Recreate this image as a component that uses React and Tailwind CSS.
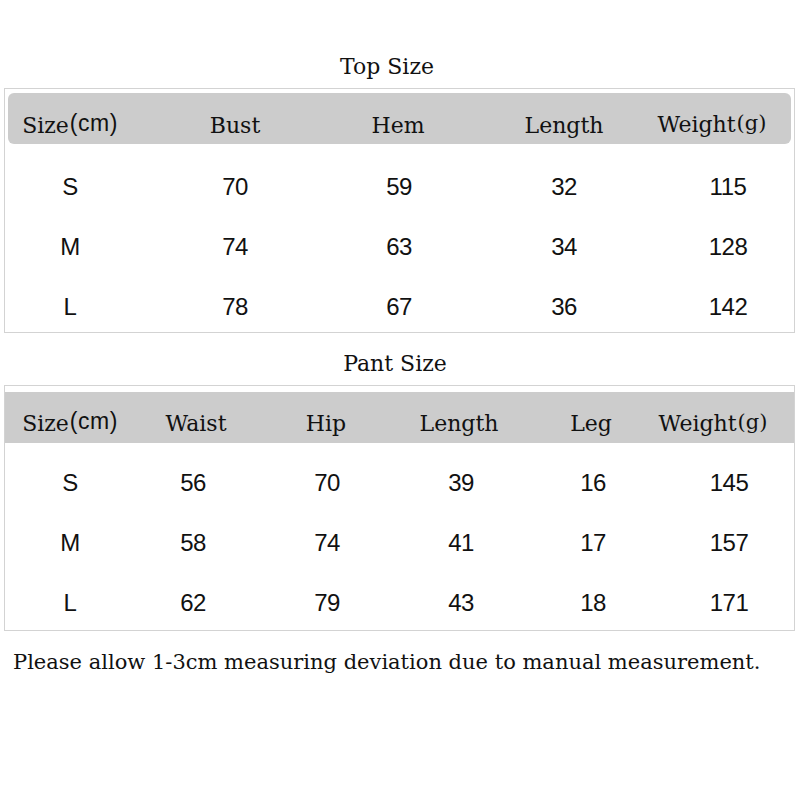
export default function App() {
  const serif = "font-['DejaVu_Serif',serif]";
  const sans = "font-['Liberation_Sans',sans-serif]";
  const topRows = [
    ["S", "70", "59", "32", "115"],
    ["M", "74", "63", "34", "128"],
    ["L", "78", "67", "36", "142"],
  ];
  const pantRows = [
    ["S", "56", "70", "39", "16", "145"],
    ["M", "58", "74", "41", "17", "157"],
    ["L", "62", "79", "43", "18", "171"],
  ];
  const cell = "flex justify-center whitespace-nowrap";
  const SizeCm = () => (
    <span className="whitespace-nowrap">
      Size<span className={`${sans} text-[23px] tracking-[0.5px] relative top-[-2px] ml-[1px]`}>(cm)</span>
    </span>
  );
  const WeightG = () => (
    <span className="whitespace-nowrap">
      Weight<span className="text-[21px] ml-[1px] relative top-[-2px]">(g)</span>
    </span>
  );
  return (
    <div className="w-[800px] h-[800px] bg-white text-[#111] overflow-hidden">
      <div className={`${serif} text-[22px] leading-none text-center pt-[56px] w-[774px]`}>Top Size</div>
      <div className="mx-[4px] mt-[10px] w-[791px] border border-[#d3d3d3] h-[245px]">
        <div className={`mx-[3px] mt-[4px] h-[51px] pt-[13px] bg-[#cccccc] rounded-[6px] grid grid-cols-[124px_206px_120px_212px_84px] items-center ${serif} text-[22px]`}>
          <div className={cell}><SizeCm /></div>
          <div className={cell}>Bust</div>
          <div className={cell}>Hem</div>
          <div className={cell}>Length</div>
          <div className={cell}><WeightG /></div>
        </div>
        <div className={`pt-[13px] ${sans} text-[24px] tracking-[-0.5px]`}>
          {topRows.map((r, i) => (
            <div key={i} className="h-[60px] grid grid-cols-[130px_200px_128px_202px_126px] items-center">
              {r.map((v, j) => (
                <div key={j} className={cell}>{v}</div>
              ))}
            </div>
          ))}
        </div>
      </div>
      <div className={`${serif} text-[22px] leading-none text-center pt-[20px] w-[790px]`}>Pant Size</div>
      <div className="mx-[4px] mt-[10px] w-[791px] border border-[#d3d3d3] h-[246px]">
        <div className={`mt-[6px] h-[51px] pt-[12px] bg-[#cccccc] grid grid-cols-[130px_122px_138px_128px_136px_108px] items-center ${serif} text-[22px]`}>
          <div className={cell}><SizeCm /></div>
          <div className={cell}>Waist</div>
          <div className={cell}>Hip</div>
          <div className={cell}>Length</div>
          <div className={cell}>Leg</div>
          <div className={cell}><WeightG /></div>
        </div>
        <div className={`pt-[10px] ${sans} text-[24px] tracking-[-0.5px]`}>
          {pantRows.map((r, i) => (
            <div key={i} className="h-[60px] grid grid-cols-[130px_116px_152px_116px_148px_124px] items-center">
              {r.map((v, j) => (
                <div key={j} className={cell}>{v}</div>
              ))}
            </div>
          ))}
        </div>
      </div>
      <div className={`${serif} text-[21px] leading-none pl-[13px] pt-[21px] whitespace-nowrap`}>
        Please allow 1-3cm measuring deviation due to manual measurement.
      </div>
    </div>
  );
}
